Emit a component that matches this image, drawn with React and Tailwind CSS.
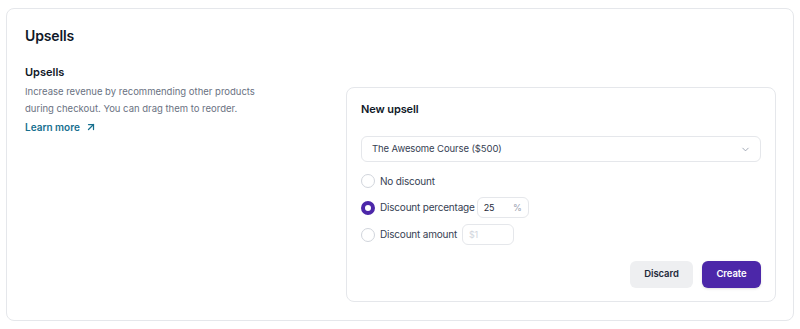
import { ChevronDown, ArrowUpRight } from "lucide-react";

const Radio = ({ checked }) => (
  <span
    className={
      checked
        ? "h-[14px] w-[14px] shrink-0 rounded-full border-[4px] border-[#4c27a9] bg-white"
        : "h-[14px] w-[14px] shrink-0 rounded-full border border-gray-300 bg-white"
    }
  />
);

const App = () => {
  return (
    <div className="min-h-screen bg-white px-[6px] pt-[8px] font-['Inter',sans-serif]">
      <div className="h-[313px] rounded-lg border border-gray-200 pl-[18px] pr-[17px] pt-[15px]">
        <h1 className="text-[14px] font-semibold leading-6 tracking-[-0.01em] text-gray-900">Upsells</h1>

        <div className="mt-[14px] flex">
          <div className="flex-1">
            <h2 className="text-[11px] font-semibold leading-5 text-gray-900">Upsells</h2>
            <p className="mt-[1px] w-[260px] text-[9.5px] leading-[17px] text-gray-500">
              Increase revenue by recommending other products during checkout. You can drag them to reorder.
            </p>
            <a href="#" className="mt-[1px] flex items-center gap-[5px] text-[10px] font-semibold leading-[18px] text-[#17708f]">
              Learn more
              <ArrowUpRight className="h-[12px] w-[12px]" strokeWidth={2.5} />
            </a>
          </div>

          <div className="mt-[25px] w-[430px] rounded-lg border border-gray-200 px-[14px] pb-[13px] pt-[11px]">
            <h3 className="text-[11px] font-semibold leading-5 tracking-[-0.01em] text-gray-900">New upsell</h3>

            <div className="mt-[17px] flex h-[26px] items-center justify-between rounded-md border border-gray-200 pl-[10px] pr-[9px] text-[9.5px] tracking-[-0.01em] text-gray-700">
              <span>The Awesome Course ($500)</span>
              <ChevronDown className="h-[11px] w-[11px] text-gray-400" />
            </div>

            <div className="mt-[9px] flex flex-col gap-[6px] text-[10px] tracking-[-0.02em] text-gray-700">
              <label className="flex h-[20px] items-center gap-[5px]">
                <Radio />
                No discount
              </label>
              <label className="flex h-[21px] items-center gap-[5px]">
                <Radio checked />
                Discount percentage
                <span className="ml-[-3px] flex h-[21px] w-[52px] items-center justify-between rounded-md border border-gray-200 px-[6px] text-[9px]">
                  <span className="text-gray-800">25</span>
                  <span className="text-gray-400">%</span>
                </span>
              </label>
              <label className="flex h-[21px] items-center gap-[5px]">
                <Radio />
                Discount amount
                <span className="flex h-[21px] w-[52px] items-center rounded-md border border-gray-200 px-[6px] text-[9px] text-gray-300">
                  $1
                </span>
              </label>
            </div>

            <div className="mt-[16px] flex justify-end gap-[9px]">
              <button className="h-[27px] w-[63px] rounded-md bg-[#eeeff1] text-[9.5px] font-semibold tracking-[-0.01em] text-gray-800">
                Discard
              </button>
              <button className="h-[27px] w-[59px] rounded-md bg-[#4c27a9] text-[9.5px] font-semibold tracking-[-0.01em] text-white shadow-sm">
                Create
              </button>
            </div>
          </div>
        </div>
      </div>
    </div>
  );
};

export default App;
